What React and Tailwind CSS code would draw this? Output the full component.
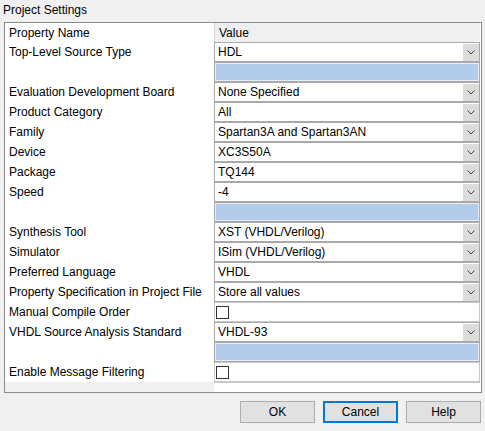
const rows = [
  { name: "Top-Level Source Type", type: "select", value: "HDL" },
  { name: "", type: "blank" },
  { name: "Evaluation Development Board", type: "select", value: "None Specified" },
  { name: "Product Category", type: "select", value: "All" },
  { name: "Family", type: "select", value: "Spartan3A and Spartan3AN" },
  { name: "Device", type: "select", value: "XC3S50A" },
  { name: "Package", type: "select", value: "TQ144" },
  { name: "Speed", type: "select", value: "-4" },
  { name: "", type: "blank" },
  { name: "Synthesis Tool", type: "select", value: "XST (VHDL/Verilog)" },
  { name: "Simulator", type: "select", value: "ISim (VHDL/Verilog)" },
  { name: "Preferred Language", type: "select", value: "VHDL" },
  { name: "Property Specification in Project File", type: "select", value: "Store all values" },
  { name: "Manual Compile Order", type: "check" },
  { name: "VHDL Source Analysis Standard", type: "select", value: "VHDL-93" },
  { name: "", type: "blank" },
  { name: "Enable Message Filtering", type: "check" },
];

function Chevron() {
  return (
    <svg width="8" height="5" viewBox="0 0 8 5">
      <polyline points="0.5,0.5 4,4 7.5,0.5" fill="none" stroke="#444444" strokeWidth="1" />
    </svg>
  );
}

function ValueCell({ row }) {
  if (row.type === "blank") {
    return <div className="h-[20px] border border-[#a9a9a9] bg-[#b1cdea] shadow-[inset_0_0_0_1px_#e4eef8]" />;
  }
  if (row.type === "check") {
    return (
      <div className="h-[20px] border border-[#c8c8c8] bg-white flex items-center pl-[1px]">
        <div className="w-[13px] h-[13px] border border-[#333333] bg-white" />
      </div>
    );
  }
  return (
    <div className="h-[20px] border border-[#a9a9a9] bg-white flex items-center">
      <span className="flex-1 pl-[3px] pt-[1px] leading-[17px] whitespace-nowrap">{row.value}</span>
      <div className="w-[16px] h-[17px] bg-[#dcdcdc] flex items-center justify-center">
        <Chevron />
      </div>
    </div>
  );
}

function Button({ label, focused }) {
  return (
    <button
      className={
        "w-[75px] h-[22px] bg-[#e1e1e1] text-[12px] text-black flex items-center justify-center " +
        (focused ? "border-2 border-[#0078d7]" : "border border-[#adadad]")
      }
    >
      {label}
    </button>
  );
}

export default function App() {
  return (
    <div
      className="w-[485px] h-[431px] bg-[#f0f0f0] text-[12px] text-black overflow-hidden"
      style={{ fontFamily: '"Liberation Sans", Arial, sans-serif' }}
    >
      <div className="h-[22px] pl-[3px] pt-[2px] leading-[16px]">Project Settings</div>

      <div className="ml-[4px] w-[478px] h-[371px] border border-[#8a8a8a] flex bg-white">
        <div className="w-[209px] flex flex-col">
          <div className="h-[19px] pl-[4px] pt-[1px] leading-[18px] bg-white">Property Name</div>
          {rows.map((r, i) => (
            <div key={i} className="h-[20px] pl-[4px] pt-[1px] leading-[19px] bg-white whitespace-nowrap">
              {r.name}
            </div>
          ))}
          <div className="flex-1 bg-[#f0f0f0]" />
        </div>

        <div className="w-[266px] flex flex-col">
          <div className="h-[19px] pl-[4px] pt-[1px] leading-[18px] bg-[#f0f0f0] border-l border-[#d8d8d8]">Value</div>
          {rows.map((r, i) => (
            <ValueCell key={i} row={r} />
          ))}
          <div className="flex-1 bg-white border-t border-[#c8c8c8]" />
        </div>

        <div className="flex-1 bg-white" />
      </div>

      <div className="flex justify-end gap-[8px] pr-[4px] mt-[8px]">
        <Button label="OK" />
        <Button label="Cancel" focused />
        <Button label="Help" />
      </div>
    </div>
  );
}
